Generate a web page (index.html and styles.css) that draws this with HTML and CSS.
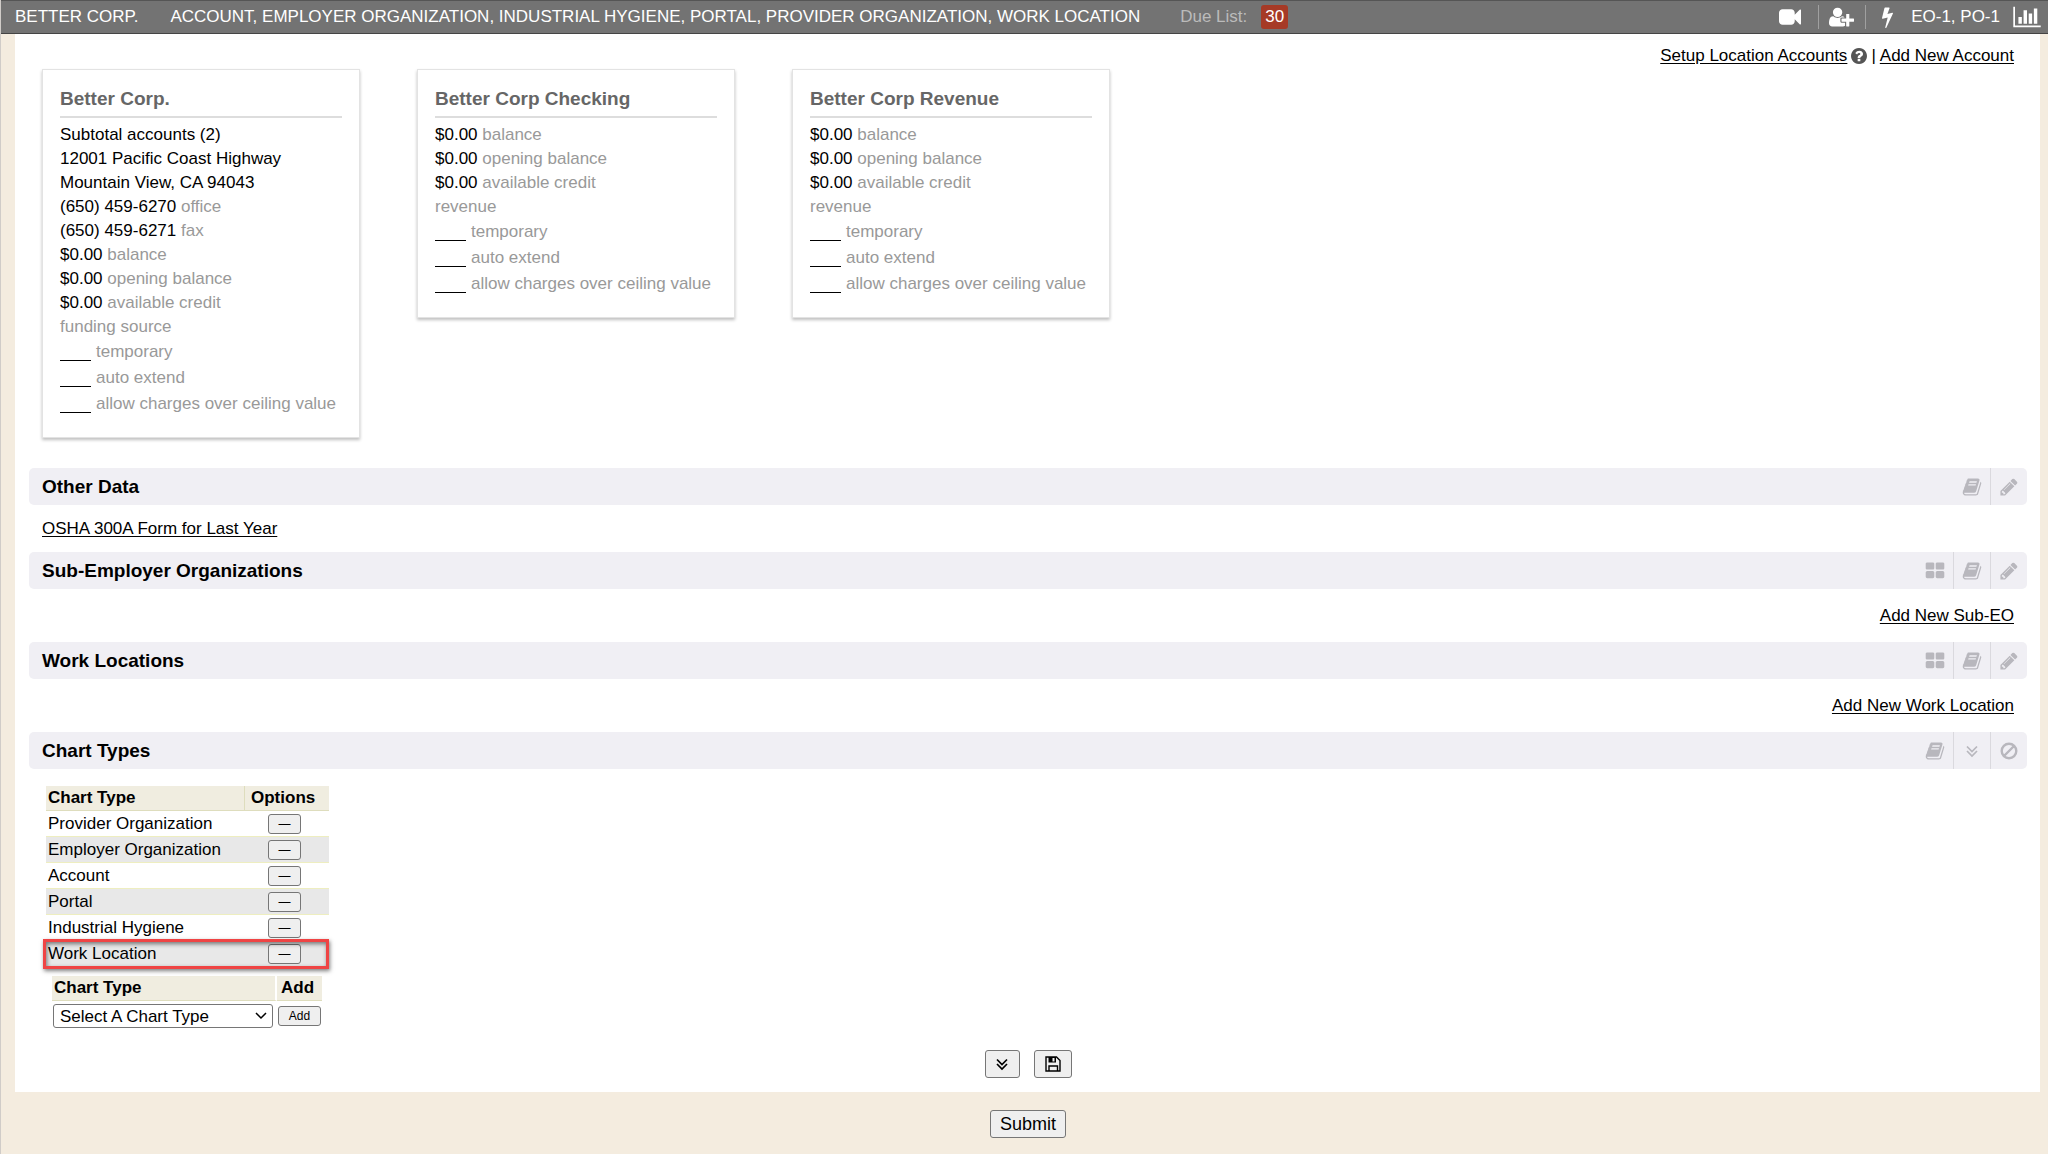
FILE: index.html
```html
<!DOCTYPE html>
<html lang="en">
<head>
  <meta charset="UTF-8">
  <title>Better Corp.</title>
  <meta name="viewport" content="width=device-width, initial-scale=1.0">
  <link rel="stylesheet" href="styles.css">
</head>
<body>
  <!-- icon sprite -->
  <svg class="sprite" aria-hidden="true">
    <symbol id="i-video" viewBox="0 0 1792 1792"><path d="M1792 352v1088q0 42-39 59-13 5-25 5-27 0-45-19l-403-403v166q0 119-84.5 203.5t-203.5 84.5h-704q-119 0-203.5-84.5t-84.5-203.5v-704q0-119 84.5-203.5t203.5-84.5h704q119 0 203.5 84.5t84.5 203.5v165l403-402q18-19 45-19 12 0 25 5 39 17 39 59z"/></symbol>
    <symbol id="i-user-plus" viewBox="0 0 2048 1792"><path d="M704 896q-159 0-271.5-112.5t-112.5-271.5 112.5-271.5 271.5-112.5 271.5 112.5 112.5 271.5-112.5 271.5-271.5 112.5zm960 128h352q13 0 22.5 9.5t9.5 22.5v192q0 13-9.5 22.5t-22.5 9.5h-352v352q0 13-9.5 22.5t-22.5 9.5h-192q-13 0-22.5-9.5t-9.5-22.5v-352h-352q-13 0-22.5-9.5t-9.5-22.5v-192q0-13 9.5-22.5t22.5-9.5h352v-352q0-13 9.5-22.5t22.5-9.5h192q13 0 22.5 9.5t9.5 22.5v352zm-736 224q0 52 38 90t90 38h256v238q-68 50-171 50h-874q-121 0-194-69t-73-190q0-53 3.5-103.5t14-109 26.5-108.5 43-97.5 62-81 85.5-53.5 111.5-20q19 0 39 17 79 61 154.5 91.5t164.5 30.5 164.5-30.5 154.5-91.5q20-17 39-17 132 0 217 96h-223q-52 0-90 38t-38 90v192z"/></symbol>
    <symbol id="i-bolt" viewBox="448 0 896 1792"><path d="M1333 566q18 20 7 44l-540 1157q-13 25-42 25-4 0-14-2-17-5-25.5-19t-4.5-30l197-808-406 101q-4 1-12 1-18 0-31-11-18-15-13-39l201-825q4-14 16-23t28-9h328q19 0 32 12.5t13 29.5q0 8-5 18l-171 463 396-98q8-2 12-2 19 0 34 15z"/></symbol>
    <symbol id="i-bars" viewBox="0 0 2048 1792"><path d="M640 896v512h-256v-512h256zm384-512v1024h-256v-1024h256zm1024 1152v128h-2048v-1536h128v1408h1920zm-640-896v768h-256v-768h256zm384-384v1152h-256v-1152h256z"/></symbol>
    <symbol id="i-help" viewBox="128 128 1536 1536"><path d="M1024 1376v-192q0-14-9-23t-23-9h-192q-14 0-23 9t-9 23v192q0 14 9 23t23 9h192q14 0 23-9t9-23zm256-672q0-88-55.5-163t-138.5-116-170-41q-243 0-371 213-15 24 8 42l132 100q7 6 19 6 16 0 25-12 53-68 86-92 34-24 86-24 48 0 85.5 26t37.5 59q0 38-20 61t-68 45q-63 28-115.5 86.5t-52.5 125.5v36q0 14 9 23t23 9h192q14 0 23-9t9-23q0-19 21.5-49.5t54.5-49.5q32-18 49-28.5t46-35 44.5-48 28-60.5 12.5-81zm384 192q0 209-103 385.5t-279.5 279.5-385.5 103-385.5-103-279.5-279.5-103-385.5 103-385.5 279.5-279.5 385.5-103 385.5 103 279.5 279.5 103 385.5z"/></symbol>
    <symbol id="i-book" viewBox="0 0 1792 1792"><path d="M1703 478q40 57 18 129l-275 906q-19 64-76.5 107.5t-122.5 43.5h-923q-77 0-148.5-53.5t-99.5-131.5q-24-67-2-127 0-4 3-27t4-37q1-8-3-21.5t-3-19.5q2-11 8-21t16.5-23.5 16.5-23.5q23-38 45-91.5t30-91.5q3-10 .5-30t-.5-28q3-11 17-28t17-23q21-36 42-92t25-90q1-9-2.5-32t.5-28q4-13 22-30.5t22-22.5q19-26 42.5-84.5t27.5-96.5q1-8-3-25.5t-2-26.5q2-8 9-18t18-23 17-21q8-12 16.5-30.5t15-35 16-36 19.5-32 26.5-23.5 36-11.5 47.5 5.5l-1 3q38-9 51-9h761q74 0 114 56t18 130l-274 906q-36 119-71.5 153.5t-128.5 34.5h-869q-27 0-38 15-11 16-1 43 24 70 144 70h923q29 0 56-15.5t35-41.5l300-987q7-22 5-57 38 15 59 43zm-1064 2q-4 13 2 22.5t20 9.5h608q13 0 25.5-9.5t16.5-22.5l21-64q4-13-2-22.5t-20-9.5h-608q-13 0-25.5 9.5t-16.5 22.5zm-83 256q-4 13 2 22.5t20 9.5h608q13 0 25.5-9.5t16.5-22.5l21-64q4-13-2-22.5t-20-9.5h-608q-13 0-25.5 9.5t-16.5 22.5z"/></symbol>
    <symbol id="i-pencil" viewBox="0 0 1792 1792"><path d="M491 1536l91-91-235-235-91 91v107h128v128h107zm523-928q0-22-22-22-10 0-17 7l-542 542q-7 7-7 17 0 22 22 22 10 0 17-7l542-542q7-7 7-17zm-54-192l416 416-832 832h-416v-416zm683 96q0 53-37 90l-166 166-416-416 166-165q36-38 90-38 53 0 91 38l235 234q37 39 37 91z"/></symbol>
    <symbol id="i-grid" viewBox="0 0 1792 1792"><path d="M832 1024v384q0 52-38 90t-90 38h-512q-52 0-90-38t-38-90v-384q0-52 38-90t90-38h512q52 0 90 38t38 90zm0-768v384q0 52-38 90t-90 38h-512q-52 0-90-38t-38-90v-384q0-52 38-90t90-38h512q52 0 90 38t38 90zm896 768v384q0 52-38 90t-90 38h-512q-52 0-90-38t-38-90v-384q0-52 38-90t90-38h512q52 0 90 38t38 90zm0-768v384q0 52-38 90t-90 38h-512q-52 0-90-38t-38-90v-384q0-52 38-90t90-38h512q52 0 90 38t38 90z"/></symbol>
    <symbol id="i-down" viewBox="0 0 20 20"><path d="M5 5.5l5 5 5-5M5 10l5 5 5-5" fill="none" stroke="currentColor" stroke-width="1.7"/></symbol>
    <symbol id="i-ban" viewBox="0 0 20 20"><path d="M10 2.7a7.3 7.3 0 1 0 0 14.6a7.3 7.3 0 1 0 0-14.6zM5 15L15 5" fill="none" stroke="currentColor" stroke-width="2.4"/></symbol>
    <symbol id="i-save" viewBox="0 0 16 16"><path d="M1 1h10.5l3.5 3.5V15H1z" fill="none" stroke="currentColor" stroke-width="1.4"/><path d="M4 15v-5h8.500v5" fill="none" stroke="currentColor" stroke-width="1.4"/><path d="M3.500 1h7.500v5.500h-7.500zM7.500 2v3.500h2V2z" fill-rule="evenodd"/></symbol>
  </svg>

  <header class="topbar">
    <span class="org">BETTER CORP.</span>
    <span class="types">ACCOUNT, EMPLOYER ORGANIZATION, INDUSTRIAL HYGIENE, PORTAL, PROVIDER ORGANIZATION, WORK LOCATION</span>
    <span class="due">Due List:</span>
    <a class="badge" href="#">30</a>
    <nav class="tools">
      <a href="#" class="tool" aria-label="Video"><svg class="icon"><use href="#i-video"/></svg></a>
      <a href="#" class="tool" aria-label="Add user"><svg class="icon icon-user"><use href="#i-user-plus"/></svg></a>
      <a href="#" class="tool bolt" aria-label="Quick actions"><svg class="icon icon-bolt"><use href="#i-bolt"/></svg></a>
      <span>EO-1, PO-1</span>
      <a href="#" class="chart" aria-label="Reports"><svg class="icon icon-bars"><use href="#i-bars"/></svg></a>
    </nav>
  </header>

  <main class="page">
    <div class="links">
      <a href="#">Setup Location Accounts</a>
      <svg class="help"><use href="#i-help"/></svg>
      <span>|</span>
      <a href="#">Add New Account</a>
    </div>

    <div class="cards">
      <div class="card">
        <h3>Better Corp.</h3>
        <ul>
          <li>Subtotal accounts (2)</li>
          <li>12001 Pacific Coast Highway</li>
          <li>Mountain View, CA 94043</li>
          <li>(650) 459-6270 <span>office</span></li>
          <li>(650) 459-6271 <span>fax</span></li>
          <li>$0.00 <span>balance</span></li>
          <li>$0.00 <span>opening balance</span></li>
          <li>$0.00 <span>available credit</span></li>
          <li><span>funding source</span></li>
        </ul>
        <ul class="flags">
          <li><i class="blank"></i><span>temporary</span></li>
          <li><i class="blank"></i><span>auto extend</span></li>
          <li><i class="blank"></i><span>allow charges over ceiling value</span></li>
        </ul>
      </div>
      <div class="card">
        <h3>Better Corp Checking</h3>
        <ul>
          <li>$0.00 <span>balance</span></li>
          <li>$0.00 <span>opening balance</span></li>
          <li>$0.00 <span>available credit</span></li>
          <li><span>revenue</span></li>
        </ul>
        <ul class="flags">
          <li><i class="blank"></i><span>temporary</span></li>
          <li><i class="blank"></i><span>auto extend</span></li>
          <li><i class="blank"></i><span>allow charges over ceiling value</span></li>
        </ul>
      </div>
      <div class="card">
        <h3>Better Corp Revenue</h3>
        <ul>
          <li>$0.00 <span>balance</span></li>
          <li>$0.00 <span>opening balance</span></li>
          <li>$0.00 <span>available credit</span></li>
          <li><span>revenue</span></li>
        </ul>
        <ul class="flags">
          <li><i class="blank"></i><span>temporary</span></li>
          <li><i class="blank"></i><span>auto extend</span></li>
          <li><i class="blank"></i><span>allow charges over ceiling value</span></li>
        </ul>
      </div>
    </div>

    <section>
      <div class="bar">
        <h2>Other Data</h2>
        <a href="#" aria-label="History"><svg><use href="#i-book"/></svg></a>
        <a href="#" aria-label="Edit"><svg><use href="#i-pencil"/></svg></a>
      </div>
      <div class="content"><a href="#">OSHA 300A Form for Last Year</a></div>
    </section>

    <section>
      <div class="bar">
        <h2>Sub-Employer Organizations</h2>
        <a href="#" aria-label="Grid view"><svg><use href="#i-grid"/></svg></a>
        <a href="#" aria-label="History"><svg><use href="#i-book"/></svg></a>
        <a href="#" aria-label="Edit"><svg><use href="#i-pencil"/></svg></a>
      </div>
      <div class="content right"><a href="#">Add New Sub-EO</a></div>
    </section>

    <section>
      <div class="bar">
        <h2>Work Locations</h2>
        <a href="#" aria-label="Grid view"><svg><use href="#i-grid"/></svg></a>
        <a href="#" aria-label="History"><svg><use href="#i-book"/></svg></a>
        <a href="#" aria-label="Edit"><svg><use href="#i-pencil"/></svg></a>
      </div>
      <div class="content right"><a href="#">Add New Work Location</a></div>
    </section>

    <section>
      <div class="bar">
        <h2>Chart Types</h2>
        <a href="#" aria-label="History"><svg><use href="#i-book"/></svg></a>
        <a href="#" aria-label="Expand"><svg><use href="#i-down"/></svg></a>
        <a href="#" aria-label="Disable"><svg><use href="#i-ban"/></svg></a>
      </div>

      <table class="types-table">
        <thead>
          <tr><th>Chart Type</th><th class="options">Options</th></tr>
        </thead>
        <tbody>
          <tr><td>Provider Organization</td><td><button type="button" class="small">—</button></td></tr>
          <tr><td>Employer Organization</td><td><button type="button" class="small">—</button></td></tr>
          <tr><td>Account</td><td><button type="button" class="small">—</button></td></tr>
          <tr><td>Portal</td><td><button type="button" class="small">—</button></td></tr>
          <tr><td>Industrial Hygiene</td><td><button type="button" class="small">—</button></td></tr>
          <tr class="marked"><td>Work Location</td><td><button type="button" class="small">—</button></td></tr>
        </tbody>
      </table>

      <table class="add-table">
        <thead>
          <tr><th><label for="chart-type">Chart Type</label></th><th>Add</th></tr>
        </thead>
        <tbody>
          <tr>
            <td>
              <div class="select">
                <select id="chart-type"><option>Select A Chart Type</option></select>
                <svg viewBox="0 0 12 8"><path d="M1 1l5 5 5-5"/></svg>
              </div>
            </td>
            <td><button type="button" class="small add">Add</button></td>
          </tr>
        </tbody>
      </table>
    </section>

    <div class="actions">
      <button type="button" aria-label="Expand all"><svg class="down"><use href="#i-down"/></svg></button>
      <button type="button" aria-label="Save"><svg class="save"><use href="#i-save"/></svg></button>
    </div>
  </main>

  <footer class="footer">
    <button type="submit">Submit</button>
  </footer>
</body>
</html>
```

FILE: styles.css
```css
* { box-sizing: border-box; }
body { margin: 0; background: #f4ecdf; color: #000; font: 17px/24px "Liberation Sans", Arial, sans-serif; min-height: 100vh; border-left: 1px solid #d0ccc8; }
a { color: inherit; text-underline-offset: 2px; }
h2, h3, ul { margin: 0; padding: 0; }
ul { list-style: none; }
svg { display: block; fill: currentColor; }
.sprite { position: absolute; width: 0; height: 0; }

/* top bar */
.topbar { display: flex; align-items: center; height: 34px; padding: 0 7px 0 14px; background: #737373; color: #fff; border-top: 1px solid #555; border-bottom: 1px solid #444; white-space: nowrap; }
.types { margin-left: 32px; }
.due { margin-left: 40px; color: #bbb; }
.badge { margin-left: 14px; padding: 0 4px; background: #a63a26; border-radius: 3px; text-decoration: none; }
.tools { display: flex; align-items: center; margin-left: auto; }
.tool { display: flex; align-items: center; height: 24px; padding: 0 11px 0 10px; border-right: 1px solid #a0a0a0; }
.tool:first-child { padding-right: 17px; }
.tool.bolt { border: 0; padding: 0 18px 0 16px; }
.chart { margin-left: 13px; }
.icon { width: 22px; height: 22px; }
.icon-user { width: 25px; }
.icon-bolt { width: 11px; }
.icon-bars { width: 28px; height: 24px; }

/* page */
.page { margin: 0 8px 0 14px; padding: 10px 13px 14px 14px; background: #fff; }
.links { display: flex; justify-content: flex-end; align-items: center; gap: 4px; padding-right: 13px; }
.help { width: 16px; height: 16px; color: #555; }
.cards { display: flex; align-items: flex-start; gap: 57px; margin: 1px 13px 30px; }
.card { min-width: 318px; padding: 17px 17px 20px; border: 1px solid #e3e3e3; box-shadow: 0 2px 3px rgba(0, 0, 0, .25); }
.card h3 { margin-bottom: 5px; padding-bottom: 5px; border-bottom: 2px solid #ddd; color: #666; font-size: 19px; }
.card span { color: #999; }
.flags { line-height: 26px; }
.blank { display: inline-block; width: 31px; height: 1px; margin-right: 5px; background: #000; vertical-align: -4px; }

/* section headers */
.bar { display: flex; height: 37px; background: #f0eff4; border-radius: 5px; }
.bar h2 { flex: 1; padding-left: 13px; font-size: 19px; line-height: 37px; }
.bar a { display: flex; align-items: center; justify-content: center; width: 37px; color: #b8b7bd; }
.bar a + a { border-left: 1px solid #dad9de; }
.bar svg { width: 20px; height: 20px; }
.content { padding: 12px 13px 11px; }
.content.right { padding: 15px 13px 14px; text-align: right; }

/* tables */
table { border-collapse: separate; border-spacing: 0; }
td, th { padding: 0 2px; text-align: left; }
th { height: 24px; background: #f0ede0; border-bottom: 1px solid #deddbd; }
.types-table { width: 283px; margin: 17px 0 0 17px; }
.types-table th:first-child { width: 199px; border-right: 1px solid #deddbd; }
.types-table th.options { padding-left: 6px; }
.types-table td { height: 26px; border-bottom: 1px solid #eeeec0; }
.types-table td:last-child { padding-left: 23px; }
.types-table tr:nth-child(even) td { background: #e8e8e8; }
.marked { position: relative; }
.marked::after { content: ""; position: absolute; inset: -2px 0 -2px -3px; border: 3px solid #ef4444; box-shadow: 1px 2px 4px rgba(0, 0, 0, .5), inset 1px 2px 4px rgba(0, 0, 0, .5); pointer-events: none; }
.add-table { margin: 9px 0 0 23px; }
.add-table th:first-child { width: 225px; border-right: 2px solid #fff; }
.add-table th:last-child { width: 45px; padding-left: 4px; }
.add-table td { padding: 3px 1px 0; }

/* controls */
button, select { font: inherit; color: #000; border: 1px solid #767676; border-radius: 3px; }
button { display: flex; align-items: center; justify-content: center; padding: 0; background: #efefef; }
.small { width: 33px; height: 20px; font-size: 12px; }
.small.add { width: 43px; }
.select { position: relative; width: 220px; }
.select select { display: block; appearance: none; width: 100%; height: 24px; padding: 0 6px; background: #fff; }
.select svg { position: absolute; right: 6px; top: 8px; width: 12px; height: 8px; fill: none; stroke: #000; stroke-width: 1.5; pointer-events: none; }
.actions { display: flex; justify-content: center; gap: 14px; margin-top: 22px; }
.actions button { width: 35px; height: 28px; }
.actions button + button { width: 38px; }
.down { width: 20px; height: 20px; }
.save { width: 16px; height: 16px; }
.footer { display: flex; justify-content: center; padding: 18px 7px 16px 14px; }
.footer button { width: 76px; height: 28px; font-size: 18px; }
```
